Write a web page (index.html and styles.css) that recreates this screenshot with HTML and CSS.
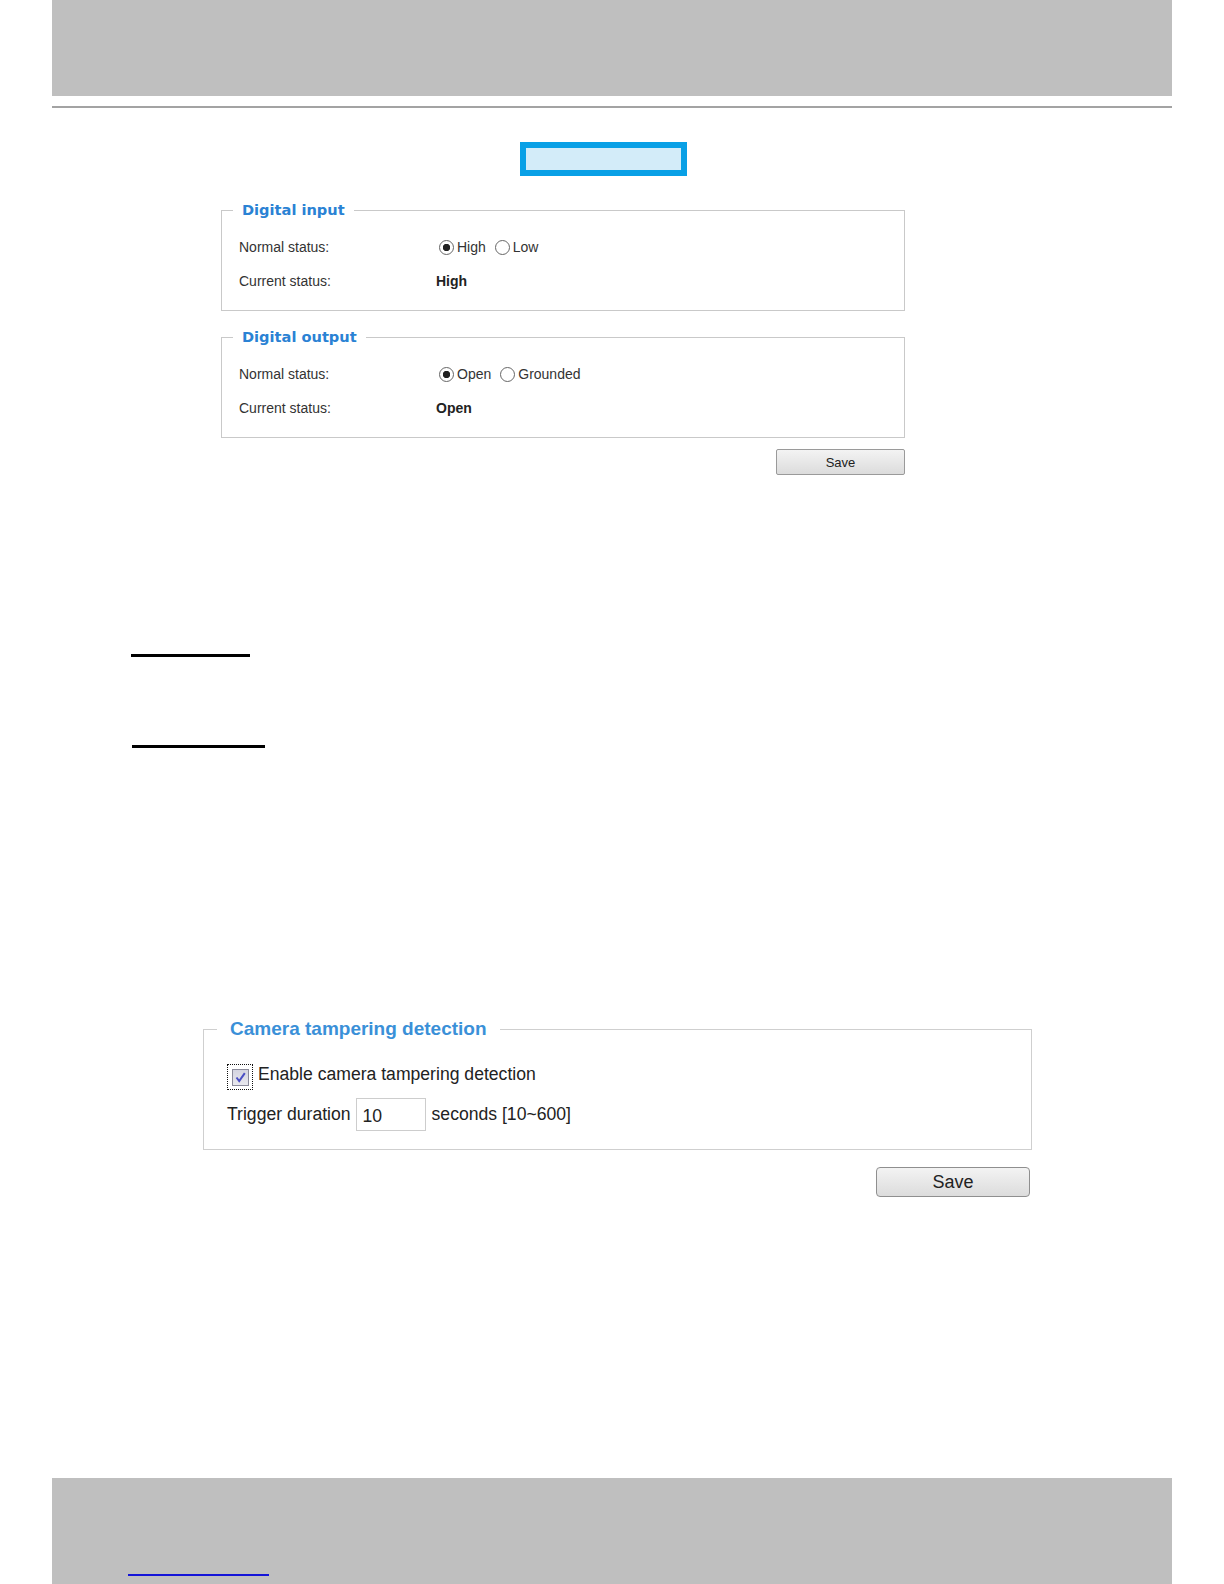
FILE: index.html
```html
<!DOCTYPE html>
<html lang="en">
<head>
    <meta charset="UTF-8">
    <title>Digital input / output</title>
    <link rel="stylesheet" href="styles.css">
</head>
<body>
    <div class="page">
        <div class="top-band"></div>
        <div class="top-rule"></div>

        <div class="tab-box"></div>

        <!-- digital input / output -->
        <form class="io-form">
            <fieldset class="io-set">
                <legend>Digital input</legend>
                <div class="io-row">
                    <span class="io-label">Normal status:</span>
                    <span class="io-value">
                        <label><input type="radio" name="di" checked>High</label>
                        <label><input type="radio" name="di">Low</label>
                    </span>
                </div>
                <div class="io-row">
                    <span class="io-label">Current status:</span>
                    <span class="io-value"><b>High</b></span>
                </div>
            </fieldset>

            <fieldset class="io-set">
                <legend>Digital output</legend>
                <div class="io-row">
                    <span class="io-label">Normal status:</span>
                    <span class="io-value">
                        <label><input type="radio" name="do" checked>Open</label>
                        <label><input type="radio" name="do">Grounded</label>
                    </span>
                </div>
                <div class="io-row">
                    <span class="io-label">Current status:</span>
                    <span class="io-value"><b>Open</b></span>
                </div>
            </fieldset>

            <div class="btn-row">
                <button type="button" class="btn-save">Save</button>
            </div>
        </form>

        <div class="rule-line first"></div>
        <div class="rule-line second"></div>

        <!-- tampering -->
        <form class="tamper-form">
            <fieldset class="tamper-set">
                <legend>Camera tampering detection</legend>
                <div class="tamper-body">
                    <label class="tamper-row check-row">
                        <span class="cbox">
                            <span class="cbox-inner">
                                <svg width="13" height="13" viewBox="0 0 13 13">
                                    <path d="M2.5 6.5 L5.2 10 L10.8 2.2" fill="none" stroke="#4b4fc4" stroke-width="2"/>
                                </svg>
                            </span>
                        </span>
                        Enable camera tampering detection
                    </label>
                    <div class="tamper-row">
                        Trigger duration
                        <input type="text" class="duration" value="10">
                        seconds [10~600]
                    </div>
                </div>
            </fieldset>
            <div class="btn-row">
                <button type="button" class="btn-save big">Save</button>
            </div>
        </form>

        <div class="bottom-band">
            <a href="#" class="band-link"></a>
        </div>
    </div>
</body>
</html>
```

FILE: styles.css
```css
body {
    margin: 0;
    background-color: #fff;
    font-family: "Liberation Sans", Arial, sans-serif;
    color: #222;
    overflow: hidden;
}

.page {
    width: 1120px;
    height: 1584px;
    margin: 0 auto;
    display: flex;
    flex-direction: column;
}

.top-band {
    height: 96px;
    background-color: #bfbfbf;
}

.top-rule {
    height: 2px;
    margin-top: 10px;
    background-color: #a3a3a3;
}

.tab-box {
    width: 155px;
    height: 22px;
    margin: 34px 0 0 468px;
    border: 6px solid #09a0e6;
    background-color: #d3ecf9;
}

/* digital input / output */

.io-form {
    width: 684px;
    margin: 25px 0 0 169px;
}

.io-set {
    margin: 0 0 17px;
    padding: 11px 0 12px 0;
    border: 1px solid #c9c9c9;
}

.io-set legend {
    margin-left: 11px;
    padding: 0 9px;
    height: 18px;
    line-height: 18px;
    font-family: "DejaVu Sans", Verdana, sans-serif;
    font-weight: bold;
    font-size: 14.6px;
    color: #2a82d4;
}

.io-row {
    height: 34px;
    padding-left: 17px;
    display: flex;
    align-items: center;
    font-size: 14px;
    color: #333;
}

.io-label {
    width: 197px;
}

.io-value {
    display: flex;
    align-items: center;
    gap: 6px;
}

.io-value b {
    color: #222;
}

.io-value label {
    display: flex;
    align-items: center;
}

.io-value input[type="radio"] {
    appearance: none;
    width: 15px;
    height: 15px;
    margin: 0 3px 0 3px;
    border: 1px solid #666;
    border-radius: 50%;
    background-color: #fff;
}

.io-value input[type="radio"]:checked {
    background: radial-gradient(circle, #222 0 3.4px, #fff 4px);
}

.btn-row {
    display: flex;
    justify-content: flex-end;
}

.btn-save {
    width: 129px;
    height: 26px;
    margin-top: -6px;
    border: 1px solid #9a9a9a;
    border-radius: 2px;
    background: linear-gradient(#f3f3f3, #dcdcdc);
    font-family: "Liberation Sans", Arial, sans-serif;
    font-size: 13px;
    color: #222;
}

/* underline markers */

.rule-line {
    height: 3px;
    background-color: #000;
}

.rule-line.first {
    width: 119px;
    margin: 179px 0 0 79px;
}

.rule-line.second {
    width: 133px;
    margin: 88px 0 0 80px;
}

/* tampering */

.tamper-form {
    width: 829px;
    margin: 270px 0 0 151px;
}

.tamper-set {
    margin: 0;
    padding: 0;
    border: 1px solid #cfcfcf;
}

.tamper-set legend {
    margin-left: 13px;
    padding: 0 13px;
    height: 22px;
    line-height: 22px;
    font-weight: bold;
    font-size: 19px;
    color: #3a90d8;
}

.tamper-body {
    padding: 23px 0 18px 23px;
    display: flex;
    flex-direction: column;
    gap: 8px;
}

.tamper-row {
    display: flex;
    align-items: center;
    gap: 5px;
    font-size: 17.6px;
    color: #222;
}

.check-row {
    align-items: flex-start;
    line-height: 22px;
}

.cbox {
    width: 24px;
    height: 24px;
    margin-top: 1px;
    border: 1px dotted #111;
    display: flex;
    align-items: center;
    justify-content: center;
}

.cbox-inner {
    width: 15px;
    height: 15px;
    border: 1px solid #8a8a9a;
    background: linear-gradient(#d4d4e0, #e8e8ee);
    display: flex;
    align-items: center;
    justify-content: center;
}

.duration {
    width: 70px;
    height: 33px;
    box-sizing: border-box;
    margin: 0 1px 0 0;
    padding: 4px 0 0 6px;
    border: 1px solid #cdcdcd;
    font-family: "Liberation Sans", Arial, sans-serif;
    font-size: 17.6px;
    color: #222;
}

.btn-save.big {
    width: 154px;
    height: 30px;
    margin: 17px 2px 0 0;
    border-radius: 4px;
    border-color: #8f8f8f;
    font-size: 18px;
}

.bottom-band {
    margin-top: auto;
    height: 106px;
    background-color: #bfbfbf;
    display: flex;
    align-items: flex-end;
}

.band-link {
    display: block;
    width: 141px;
    margin: 0 0 8px 76px;
    border-bottom: 2px solid #1414d8;
}
```
